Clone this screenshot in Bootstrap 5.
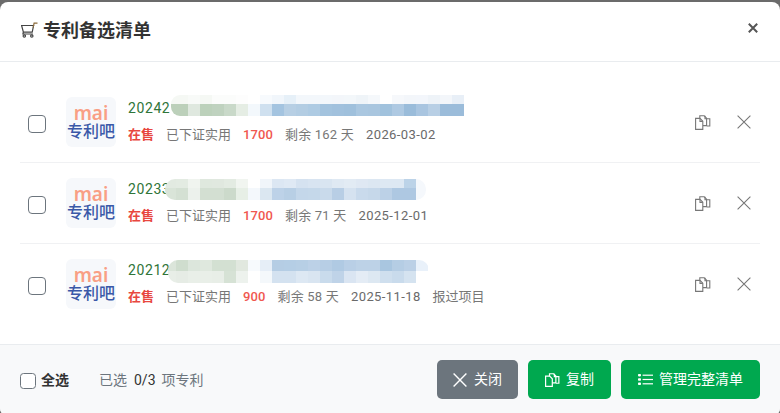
<!doctype html>
<html lang="zh">
<head>
<meta charset="utf-8">
<title>专利备选清单</title>
<link rel="stylesheet" href="https://cdn.jsdelivr.net/npm/bootstrap@5.3.0/dist/css/bootstrap.min.css">
<style>
html,body{height:413px;overflow:hidden}
body{background:#6b6b6b;font-family:Roboto,"Noto Sans CJK SC",sans-serif;padding-top:2px}
.pick-panel{border:0;border-radius:8px;height:414px;overflow:hidden;background:#fff}
.pick-head{height:60px;padding:0 20px 2px;border-bottom:1px solid #e9ecef;display:flex;align-items:center;justify-content:space-between}
.pick-title{font-size:18px;font-weight:700;color:#333;line-height:1;display:flex;align-items:center;gap:5px}
.pick-title svg{margin-top:-1px}
.pick-x{background:none;border:0;padding:0;line-height:0;margin:0 2px 5px 0}
.pick-body{padding:20px;flex:0 0 auto;height:282px}
.pick-item{height:81px;padding:15px 0;border-bottom:1px solid #f0f1f3;display:flex;align-items:center}
.pick-item:last-child{border-bottom:0;height:80px}
.pick-check{width:18px;height:18px;margin:4px 20px 0 8px;border:1.5px solid #6c757d;border-radius:3px;flex:none}
.pick-logo{width:50px;height:50px;flex:none;background:#f6f8fb;border-radius:6px;display:flex;flex-direction:column;align-items:center;justify-content:center;margin-right:12px}
.logo-a{font-size:19px;color:#f99f85;font-weight:600;font-family:"Noto Sans",sans-serif;line-height:18px;margin-bottom:1px}
.logo-b{font-size:16px;color:#3a58a8;font-weight:500;line-height:18px}
.pick-info{flex:1 1 auto;min-width:0;align-self:flex-start;padding-top:1px}
.pick-num{display:flex;align-items:center;height:20px;font-size:14px;font-weight:400;color:#2f7539;line-height:20px;margin-bottom:7px}
.num-text{width:42px;flex:none;letter-spacing:.6px}
.pick-num svg{flex:none;display:block;position:relative}
.mask-a{margin-left:1px;top:-3px}
.mask-b{margin-left:-6px}
.mask-c{margin-left:-6px;top:1px}
.pick-meta{display:flex;gap:12px;font-size:13px;line-height:20px;color:#777;white-space:nowrap}
.pick-meta b{font-weight:700}
.c-red{color:#e8473f}
.c-soft{color:#f0574f;font-weight:500;letter-spacing:.1px}
.m-left{letter-spacing:.2px}
.m-date{color:#6a6a6a;letter-spacing:.4px}
.pick-tools{display:flex;align-items:center;gap:26px;margin-right:9px}
.pick-tools svg{display:block}
.pick-foot{height:70px;background:#f8f9fa;border-top:1px solid #e9ecef;padding:15px 20px;display:flex;justify-content:space-between;align-items:flex-start}
.foot-left{display:flex;align-items:center;height:39px;margin-top:1px;font-size:14px;color:#6c757d}
.foot-check{width:16px;height:16px;border:1.5px solid #6c757d;border-radius:3px;margin:0 5px 0 0;flex:none}
.foot-all{font-weight:700;color:#333;margin-right:30px}
.foot-count{color:#333;margin:0 6px 0 7px}
.foot-btns{display:flex;gap:10px}
.act-btn{height:39px;display:flex;align-items:center;gap:6px;border:0;font-size:14px;border-radius:5px;color:#fff;padding:0 17px;white-space:nowrap}
.act-gray{background:#6c757d;padding:0 16px;gap:7px}
.act-green{background:#00a84f}
</style>
</head>
<body>
<div class="modal-content pick-panel">
  <div class="pick-head">
    <div class="pick-title">
      <svg width="18" height="16" viewBox="0 0 18 16" fill="none" stroke="#444" stroke-width="1.2"><path d="M1 3.5h12.6l-1.4 6.7H3.4L1.6 3.5"/><path d="M13.2 5.5l.9-4.3h3.4" stroke="#8a6a3a"/><path d="M3.4 10.2l-.5 1.8h10"/><circle cx="4.3" cy="14" r="1.2"/><circle cx="11.8" cy="14" r="1.2"/></svg>
      <span>专利备选清单</span>
    </div>
    <button class="pick-x" type="button" aria-label="关闭"><svg width="10" height="10" viewBox="0 0 10 10" stroke="#555" stroke-width="2"><path d="M.8.8l8.4 8.4M9.2.8L.8 9.2"/></svg></button>
  </div>
  <div class="pick-body">
    <div class="pick-item">
      <input class="form-check-input pick-check" type="checkbox" aria-label="选择">
      <div class="pick-logo"><span class="logo-a">mai</span><span class="logo-b">专利吧</span></div>
      <div class="pick-info">
        <div class="pick-num"><span class="num-text">20242</span>
          <svg width="300" height="21" viewBox="0 0 300 21" shape-rendering="crispEdges" class="mask-a"><defs><clipPath id="ma"><rect x="0" y="0" width="293" height="21" rx="9"/><rect x="20" y="0" width="273" height="21"/></clipPath></defs><g clip-path="url(#ma)">
          <rect x="0" y="0" width="17" height="9" fill="#f5f8f4"/><rect x="17" y="0" width="12" height="9" fill="#f8faf8"/><rect x="29" y="0" width="12" height="9" fill="#f5f8f4"/><rect x="41" y="0" width="12" height="9" fill="#fbfcfb"/><rect x="53" y="0" width="12" height="9" fill="#fbfcfb"/><rect x="65" y="0" width="12" height="9" fill="#fdfdfd"/><rect x="77" y="0" width="12" height="9" fill="#fff"/><rect x="89" y="0" width="12" height="9" fill="#f7fafd"/><rect x="101" y="0" width="12" height="9" fill="#f1f6fb"/><rect x="113" y="0" width="12" height="9" fill="#e6f0f8"/><rect x="125" y="0" width="12" height="9" fill="#f3f7fb"/><rect x="137" y="0" width="12" height="9" fill="#f3f7fb"/><rect x="149" y="0" width="12" height="9" fill="#f3f7fb"/><rect x="161" y="0" width="12" height="9" fill="#f3f6fa"/><rect x="173" y="0" width="12" height="9" fill="#f3f7fa"/><rect x="185" y="0" width="12" height="9" fill="#eff4f8"/><rect x="197" y="0" width="12" height="9" fill="#f5f8fb"/><rect x="209" y="0" width="12" height="9" fill="#fff"/><rect x="221" y="0" width="12" height="9" fill="#f6f8fb"/><rect x="233" y="0" width="12" height="9" fill="#f3f6fa"/><rect x="245" y="0" width="12" height="9" fill="#f3f6fb"/><rect x="257" y="0" width="12" height="9" fill="#eef3f8"/><rect x="269" y="0" width="12" height="9" fill="#f3f6fa"/><rect x="281" y="0" width="12" height="9" fill="#e8eff7"/>
          <rect x="0" y="9" width="17" height="12" fill="#bcd0ba"/><rect x="17" y="9" width="12" height="12" fill="#dfe8df"/><rect x="29" y="9" width="12" height="12" fill="#bcd1bb"/><rect x="41" y="9" width="12" height="12" fill="#bfd2bf"/><rect x="53" y="9" width="12" height="12" fill="#c9d9c9"/><rect x="65" y="9" width="12" height="12" fill="#e5ede4"/><rect x="77" y="9" width="12" height="12" fill="#f3f8fc"/><rect x="89" y="9" width="12" height="12" fill="#cfe0ef"/><rect x="101" y="9" width="12" height="12" fill="#a4c4e0"/><rect x="113" y="9" width="12" height="12" fill="#b7cfe4"/><rect x="125" y="9" width="12" height="12" fill="#b3cde3"/><rect x="137" y="9" width="12" height="12" fill="#aecbe3"/><rect x="149" y="9" width="12" height="12" fill="#a3c3de"/><rect x="161" y="9" width="12" height="12" fill="#a1c1dd"/><rect x="173" y="9" width="12" height="12" fill="#9fc0dc"/><rect x="185" y="9" width="12" height="12" fill="#aac7e0"/><rect x="197" y="9" width="12" height="12" fill="#a9c6df"/><rect x="209" y="9" width="12" height="12" fill="#a1c2dd"/><rect x="221" y="9" width="12" height="12" fill="#aec9e2"/><rect x="233" y="9" width="12" height="12" fill="#9abcda"/><rect x="245" y="9" width="12" height="12" fill="#a9c5e0"/><rect x="257" y="9" width="12" height="12" fill="#b8cfe5"/><rect x="269" y="9" width="12" height="12" fill="#9bbcda"/><rect x="281" y="9" width="12" height="12" fill="#9bbcda"/>
          </g></svg>
        </div>
        <div class="pick-meta"><b class="c-red">在售</b><span>已下证实用</span><span class="c-soft">1700</span><span class="m-left">剩余 162 天</span><span class="m-date">2026-03-02</span></div>
      </div>
      <div class="pick-tools">
        <svg width="16" height="15" viewBox="0 0 16 15" fill="none" stroke="#777" stroke-width="1.1"><path d="M.6 3.4h4.4l2.8 2.8v8.2H.6z"/><path d="M4.8 3.4V.8h4.4l2.4 2.4v7.4H8"/><path d="M10 .8v3h4.8v7.2h-3"/><path d="M5 3.6v2.8h2.8"/></svg>
        <svg width="14" height="14" viewBox="0 0 14 14" stroke="#777" stroke-width="1.1"><path d="M.6.6l12.8 12.8M13.4.6L.6 13.4"/></svg>
      </div>
    </div>
    <div class="pick-item">
      <input class="form-check-input pick-check" type="checkbox" aria-label="选择">
      <div class="pick-logo"><span class="logo-a">mai</span><span class="logo-b">专利吧</span></div>
      <div class="pick-info">
        <div class="pick-num"><span class="num-text">20233</span>
          <svg width="300" height="21" viewBox="0 0 300 21" shape-rendering="crispEdges" class="mask-b"><defs><clipPath id="mb"><rect x="1" y="0" width="261" height="21" rx="10"/></clipPath></defs><g clip-path="url(#mb)">
          <rect x="0" y="0" width="12" height="9" fill="#e2eae1"/><rect x="12" y="0" width="12" height="9" fill="#e3ebe2"/><rect x="24" y="0" width="12" height="9" fill="#f0f4ef"/><rect x="36" y="0" width="12" height="9" fill="#dfe8de"/><rect x="48" y="0" width="12" height="9" fill="#e0e8df"/><rect x="60" y="0" width="12" height="9" fill="#e3ebe2"/><rect x="72" y="0" width="12" height="9" fill="#f1f5f0"/><rect x="84" y="0" width="12" height="9" fill="#fff"/><rect x="96" y="0" width="12" height="9" fill="#f0f5fa"/><rect x="108" y="0" width="12" height="9" fill="#dce7f3"/><rect x="120" y="0" width="12" height="9" fill="#dfe9f4"/><rect x="132" y="0" width="12" height="9" fill="#d5e2f0"/><rect x="144" y="0" width="12" height="9" fill="#d8e4f1"/><rect x="156" y="0" width="12" height="9" fill="#d9e5f1"/><rect x="168" y="0" width="12" height="9" fill="#dfe9f3"/><rect x="180" y="0" width="12" height="9" fill="#e2ebf4"/><rect x="192" y="0" width="12" height="9" fill="#dfe8f3"/><rect x="204" y="0" width="12" height="9" fill="#dce7f2"/><rect x="216" y="0" width="12" height="9" fill="#dde8f3"/><rect x="228" y="0" width="12" height="9" fill="#dde8f3"/><rect x="240" y="0" width="12" height="9" fill="#bcd3e8"/><rect x="252" y="0" width="10" height="9" fill="#f5f8fc"/>
          <rect x="0" y="9" width="12" height="12" fill="#d9e4d8"/><rect x="12" y="9" width="12" height="12" fill="#d4e0d3"/><rect x="24" y="9" width="12" height="12" fill="#ecf1ec"/><rect x="36" y="9" width="12" height="12" fill="#d3dfd2"/><rect x="48" y="9" width="12" height="12" fill="#d3dfd2"/><rect x="60" y="9" width="12" height="12" fill="#ccdacb"/><rect x="72" y="9" width="12" height="12" fill="#e7efe6"/><rect x="84" y="9" width="12" height="12" fill="#f4f8fc"/><rect x="96" y="9" width="12" height="12" fill="#dbe7f1"/><rect x="108" y="9" width="12" height="12" fill="#bdd2e8"/><rect x="120" y="9" width="12" height="12" fill="#b8cfe5"/><rect x="132" y="9" width="12" height="12" fill="#c4d7ea"/><rect x="144" y="9" width="12" height="12" fill="#c5d8ea"/><rect x="156" y="9" width="12" height="12" fill="#c9daeb"/><rect x="168" y="9" width="12" height="12" fill="#b8cee5"/><rect x="180" y="9" width="12" height="12" fill="#d5e2f0"/><rect x="192" y="9" width="12" height="12" fill="#c9daec"/><rect x="204" y="9" width="12" height="12" fill="#c6d8ea"/><rect x="216" y="9" width="12" height="12" fill="#bcd1e7"/><rect x="228" y="9" width="12" height="12" fill="#aec8e2"/><rect x="240" y="9" width="12" height="12" fill="#aec8e2"/><rect x="252" y="9" width="10" height="12" fill="#f5f8fc"/>
          </g></svg>
        </div>
        <div class="pick-meta"><b class="c-red">在售</b><span>已下证实用</span><span class="c-soft">1700</span><span class="m-left">剩余 71 天</span><span class="m-date">2025-12-01</span></div>
      </div>
      <div class="pick-tools">
        <svg width="16" height="15" viewBox="0 0 16 15" fill="none" stroke="#777" stroke-width="1.1"><path d="M.6 3.4h4.4l2.8 2.8v8.2H.6z"/><path d="M4.8 3.4V.8h4.4l2.4 2.4v7.4H8"/><path d="M10 .8v3h4.8v7.2h-3"/><path d="M5 3.6v2.8h2.8"/></svg>
        <svg width="14" height="14" viewBox="0 0 14 14" stroke="#777" stroke-width="1.1"><path d="M.6.6l12.8 12.8M13.4.6L.6 13.4"/></svg>
      </div>
    </div>
    <div class="pick-item">
      <input class="form-check-input pick-check" type="checkbox" aria-label="选择">
      <div class="pick-logo"><span class="logo-a">mai</span><span class="logo-b">专利吧</span></div>
      <div class="pick-info">
        <div class="pick-num"><span class="num-text">20212</span>
          <svg width="300" height="23" viewBox="0 0 300 23" shape-rendering="crispEdges" class="mask-c"><defs><clipPath id="mc"><rect x="4" y="0" width="261" height="23" rx="10"/></clipPath></defs><g clip-path="url(#mc)">
          <rect x="0" y="0" width="12" height="11" fill="#dbe5da"/><rect x="12" y="0" width="12" height="11" fill="#cfddce"/><rect x="24" y="0" width="12" height="11" fill="#dce6dc"/><rect x="36" y="0" width="12" height="11" fill="#dfe8de"/><rect x="48" y="0" width="12" height="11" fill="#d3e0d2"/><rect x="60" y="0" width="12" height="11" fill="#d3e0d2"/><rect x="72" y="0" width="12" height="11" fill="#e1e8df"/><rect x="84" y="0" width="12" height="11" fill="#f7fafd"/><rect x="96" y="0" width="12" height="11" fill="#e6eef7"/><rect x="108" y="0" width="12" height="11" fill="#b5cde4"/><rect x="120" y="0" width="12" height="11" fill="#b5cee5"/><rect x="132" y="0" width="12" height="11" fill="#b7cfe5"/><rect x="144" y="0" width="12" height="11" fill="#bcd1e7"/><rect x="156" y="0" width="12" height="11" fill="#b7cee5"/><rect x="168" y="0" width="12" height="11" fill="#b0cae3"/><rect x="180" y="0" width="12" height="11" fill="#b9cfe6"/><rect x="192" y="0" width="12" height="11" fill="#bdd2e7"/><rect x="204" y="0" width="12" height="11" fill="#bdd2e7"/><rect x="216" y="0" width="12" height="11" fill="#a9c6e0"/><rect x="228" y="0" width="12" height="11" fill="#b5cde4"/><rect x="240" y="0" width="12" height="11" fill="#bbd0e6"/><rect x="252" y="0" width="12" height="11" fill="#e9f1fa"/>
          <rect x="0" y="11" width="12" height="12" fill="#e8eee7"/><rect x="12" y="11" width="12" height="12" fill="#e6ece5"/><rect x="24" y="11" width="12" height="12" fill="#e9efe8"/><rect x="36" y="11" width="12" height="12" fill="#e9efe8"/><rect x="48" y="11" width="12" height="12" fill="#e8eee7"/><rect x="60" y="11" width="12" height="12" fill="#d6e2d5"/><rect x="72" y="11" width="12" height="12" fill="#edf2ed"/><rect x="84" y="11" width="12" height="12" fill="#fff"/><rect x="96" y="11" width="12" height="12" fill="#f4f8fb"/><rect x="108" y="11" width="12" height="12" fill="#d4e2f0"/><rect x="120" y="11" width="12" height="12" fill="#d4e2f0"/><rect x="132" y="11" width="12" height="12" fill="#dde8f3"/><rect x="144" y="11" width="12" height="12" fill="#d9e5f1"/><rect x="156" y="11" width="12" height="12" fill="#c9dbec"/><rect x="168" y="11" width="12" height="12" fill="#bfd3e8"/><rect x="180" y="11" width="12" height="12" fill="#dae5f2"/><rect x="192" y="11" width="12" height="12" fill="#e4ecf5"/><rect x="204" y="11" width="12" height="12" fill="#dde8f2"/><rect x="216" y="11" width="12" height="12" fill="#cfdfee"/><rect x="228" y="11" width="12" height="12" fill="#c9dbec"/><rect x="240" y="11" width="12" height="12" fill="#d5e3f0"/><rect x="252" y="11" width="12" height="12" fill="#fff"/>
          </g></svg>
        </div>
        <div class="pick-meta"><b class="c-red">在售</b><span>已下证实用</span><span class="c-soft">900</span><span class="m-left">剩余 58 天</span><span class="m-date">2025-11-18</span><span>报过项目</span></div>
      </div>
      <div class="pick-tools">
        <svg width="16" height="15" viewBox="0 0 16 15" fill="none" stroke="#777" stroke-width="1.1"><path d="M.6 3.4h4.4l2.8 2.8v8.2H.6z"/><path d="M4.8 3.4V.8h4.4l2.4 2.4v7.4H8"/><path d="M10 .8v3h4.8v7.2h-3"/><path d="M5 3.6v2.8h2.8"/></svg>
        <svg width="14" height="14" viewBox="0 0 14 14" stroke="#777" stroke-width="1.1"><path d="M.6.6l12.8 12.8M13.4.6L.6 13.4"/></svg>
      </div>
    </div>
  </div>
  <div class="pick-foot">
    <div class="foot-left">
      <input class="form-check-input foot-check" type="checkbox" id="all"><label class="foot-all" for="all">全选</label>
      <span>已选</span><span class="foot-count">0/3</span><span>项专利</span>
    </div>
    <div class="foot-btns">
      <button type="button" class="btn act-btn act-gray"><svg width="14" height="14" viewBox="0 0 14 14" stroke="#fff" stroke-width="1.4"><path d="M.6.6l12.8 12.8M13.4.6L.6 13.4"/></svg>关闭</button>
      <button type="button" class="btn act-btn act-green"><svg width="15" height="14" viewBox="0 0 16 15" fill="none" stroke="#fff" stroke-width="1.3"><path d="M.6 3.4h4.4l2.8 2.8v8.2H.6z"/><path d="M4.8 3.4V.8h4.4l2.4 2.4v7.4H8"/><path d="M10 .8v3h4.8v7.2h-3"/></svg>复制</button>
      <button type="button" class="btn act-btn act-green"><svg width="15" height="11" viewBox="0 0 15 11" fill="#fff"><rect x="0" y="0" width="3" height="2.4" rx=".8"/><rect x="0" y="4.3" width="3" height="2.4" rx=".8"/><rect x="0" y="8.6" width="3" height="2.4" rx=".8"/><rect x="4.6" y=".6" width="10.4" height="1.2"/><rect x="4.6" y="4.9" width="10.4" height="1.2"/><rect x="4.6" y="9.2" width="10.4" height="1.2"/></svg>管理完整清单</button>
    </div>
  </div>
</div>
</body>
</html>
